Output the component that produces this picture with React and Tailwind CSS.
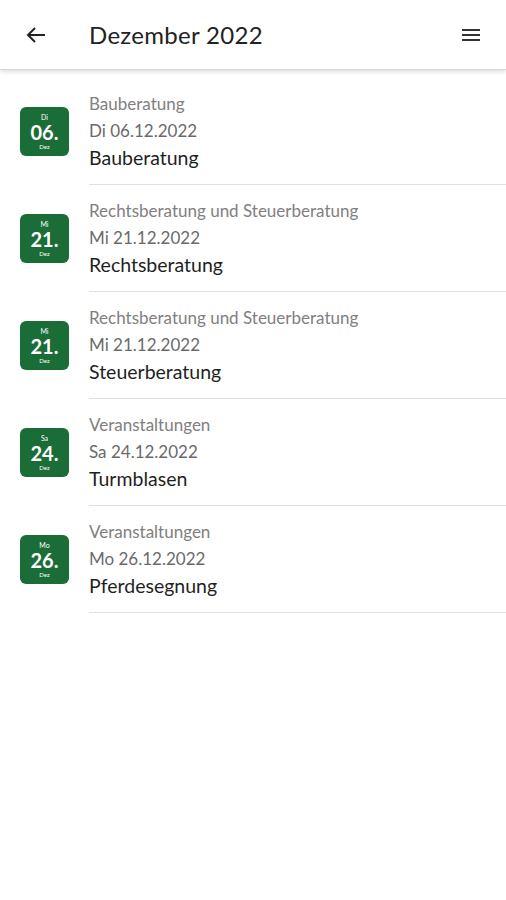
import React from 'react';

const events = [
  { cat: 'Bauberatung', wd: 'Di', day: '06.', date: 'Di 06.12.2022', title: 'Bauberatung' },
  { cat: 'Rechtsberatung und Steuerberatung', wd: 'Mi', day: '21.', date: 'Mi 21.12.2022', title: 'Rechtsberatung' },
  { cat: 'Rechtsberatung und Steuerberatung', wd: 'Mi', day: '21.', date: 'Mi 21.12.2022', title: 'Steuerberatung' },
  { cat: 'Veranstaltungen', wd: 'Sa', day: '24.', date: 'Sa 24.12.2022', title: 'Turmblasen' },
  { cat: 'Veranstaltungen', wd: 'Mo', day: '26.', date: 'Mo 26.12.2022', title: 'Pferdesegnung' },
];

const DateBadge = ({ wd, day }) => (
  <div className="w-[49px] h-[49px] rounded-[6px] bg-[#1b6d37] flex flex-col items-center justify-center text-white leading-none">
    <span className="text-[7px]">{wd}</span>
    <span className="text-[20px] font-bold mt-[1px]">{day}</span>
    <span className="text-[6px] mt-[2px]">Dez</span>
  </div>
);

export default function App() {
  return (
    <div className="w-[506px] min-h-[900px] bg-white font-['Lato','Noto_Sans',sans-serif]">
      <header className="h-[70px] flex items-center border-b border-[#d6d6d6] shadow-[0_2px_4px_rgba(0,0,0,0.12)]">
        <button className="w-[70px] h-full flex items-center justify-center pl-[1px]">
          <svg width="24" height="24" viewBox="0 0 24 24" fill="none" stroke="#222" strokeWidth="2" strokeLinecap="square">
            <path d="M20 12H5" />
            <path d="M11 5l-7 7 7 7" strokeLinecap="butt" />
          </svg>
        </button>
        <h1 className="ml-[19px] flex-1 text-[24px] text-[#222] tracking-[0.3px]">Dezember 2022</h1>
        <button className="w-[70px] h-full flex items-center justify-center">
          <svg width="24" height="24" viewBox="0 0 24 24" fill="#333">
            <rect x="3" y="6" width="18" height="2" />
            <rect x="3" y="11" width="18" height="2" />
            <rect x="3" y="16" width="18" height="2" />
          </svg>
        </button>
      </header>
      <ul className="pt-[8px]">
        {events.map((e, i) => (
          <li key={i} className="flex h-[107px]">
            <div className="w-[89px] flex items-center pl-[20px]">
              <DateBadge wd={e.wd} day={e.day} />
            </div>
            <div className="flex-1 border-b border-[#e0e0e0] flex flex-col pt-[13px]">
              <span className="text-[17px] leading-[26px] text-[#808080]">{e.cat}</span>
              <span className="text-[17px] leading-[27px] text-[#6a6a6a]">{e.date}</span>
              <span className="text-[19.5px] leading-[27px] text-[#1f1f1f]">{e.title}</span>
            </div>
          </li>
        ))}
      </ul>
    </div>
  );
}
